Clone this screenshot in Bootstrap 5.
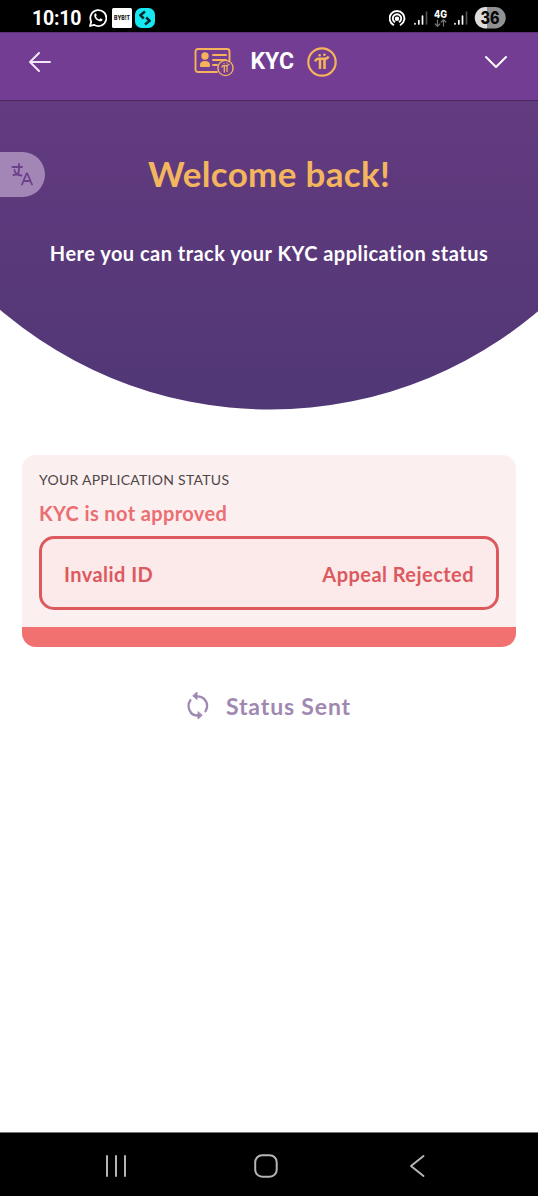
<!DOCTYPE html>
<html lang="en">
<head>
<meta charset="utf-8">
<meta name="viewport" content="width=device-width, initial-scale=1">
<title>KYC</title>
<link rel="stylesheet" href="https://cdn.jsdelivr.net/npm/bootstrap@5.3.0/dist/css/bootstrap.min.css">
<style>
body{font-family:Lato,"Open Sans",sans-serif;background:#fff}
svg{display:block;flex:none;fill:none;stroke-linecap:round;stroke-linejoin:round}
.screen{height:1200px;overflow:hidden}
.statusbar{height:32px;background:#000;color:#fff;padding:4px 29px 0 32px;font-family:Roboto,sans-serif}
.clock{font-size:19.5px;font-weight:700;line-height:29px;width:49px;white-space:nowrap;letter-spacing:-.2px}
.status-icon{margin-top:4px}
.icon-font{font-family:Inter,sans-serif;font-weight:800}
.appbar{height:69px;background:#723d92;border-top:1px solid #5d3278;border-bottom:1px solid #4b285f;padding:0 30px 10px 27px}
.app-title{font:700 23px/32px Roboto,sans-serif;color:#fff;width:44px;white-space:nowrap;margin:1px 12px 0 17px}
.hero{height:309px;background:linear-gradient(#633b80,#573879 65%,#503776);clip-path:circle(415px at 270px -106.500px);color:#fff}
.hero h1{color:#f3b65e;font-size:35px;font-weight:700;line-height:42px;padding-top:51px;margin:0;letter-spacing:.3px}
.hero p{font-size:20px;font-weight:700;line-height:28px;margin:45px 0 0;letter-spacing:.47px}
.translate-tab{top:152px;left:0;width:45px;height:45px;background:#a385b6;border-radius:0 23px 23px 0;padding:0 0 0 11px}
.status-card{margin:45px 22px 0;height:192px;border-radius:14px;background:#fbefef;border:0;overflow:hidden;padding:15px 17px 0}
.caption-line{font-size:14px;line-height:20px;color:#4e4648;letter-spacing:.27px}
.state-line{font-size:20px;font-weight:700;line-height:28px;color:#ea6e72;margin-top:9px;letter-spacing:.38px}
.result-box{height:75px;border:3px solid #dc595d;border-radius:15px;background:#fce9e9;color:#dc5960;font-size:20px;font-weight:700;padding:1px 22px 0;margin-top:9px;letter-spacing:.45px}
.card-strip{height:20px;background:#f17171;margin:17px -17px 0}
.sent{margin-top:43px;color:#9f88b2;font-size:23px;font-weight:700;line-height:32px;padding-left:186px;gap:17px;letter-spacing:.85px}
.navkeys{height:64px;background:#000;border-top:1px solid #777;margin-bottom:4px;padding:2px 113px 0 105px}
.home-key{margin-right:5px}
</style>
</head>
<body>
<main class="screen d-flex flex-column position-relative">
  <div class="statusbar d-flex align-items-start justify-content-between">
    <div class="d-flex">
      <span class="clock">10:10</span>
      <svg class="ms-2 status-icon" width="18" height="20" viewBox="0 0 18 20"><path d="M1 18l1.200-4.300A8 8 0 1 1 5 16.800z" stroke="#fff" stroke-width="1.800"/><path d="M5.500 6c1-1.400 1.600-.6 2.200 1.200L7 8.400c.8 1.600 1.800 2.400 3.200 3l1.200-1.100 2.100 1c0 2.300-2.200 2.400-4.200 1.500-2.400-1-4.900-4-3.800-6.800z" fill="#fff"/></svg>
      <svg class="status-icon" width="25" height="20" viewBox="-5 0 25 20"><rect width="20" height="20" rx="1.500" fill="#fff"/><text class="icon-font" x="2" y="12.200" font-size="5.500" textLength="16" lengthAdjust="spacingAndGlyphs" fill="#111">BYB!T</text></svg>
      <svg class="status-icon" width="23" height="20" viewBox="-3 0 23 20"><rect width="20" height="20" rx="6.500" fill="#16e8f2"/><path d="M10 3.500L5.300 7.200l3.500 3.300M11.200 9.500l3.500 3.300-4.700 3.700" stroke="#04262c" stroke-width="2.500" stroke-linecap="butt"/></svg>
    </div>
    <svg width="120" height="28" viewBox="0 0 120 28">
      <g stroke="#fff" stroke-width="1.900"><path d="M4.300 20.800a7.400 7.400 0 1 1 7.400 0M5.400 17.700a4.200 4.200 0 1 1 5.200 0"/><circle cx="8" cy="14.700" r="1.300" fill="#fff"/></g>
      <path d="M26 19.500v.5M29.800 16.500V20M33.500 12V20M66 19.500v.5M69.800 16.500V20M73.500 12V20" stroke="#fff" stroke-width="1.700"/><path d="M37.500 8V20M77.500 8V20" stroke="#555" stroke-width="1.600"/>
      <text class="icon-font" x="45" y="14" font-size="10" textLength="13" lengthAdjust="spacingAndGlyphs" fill="#fff">4G</text>
      <path d="M48.500 16v6M46.200 20l2.300 2.300 2.300-2.300M54.500 22v-6M52.200 18l2.300-2.300 2.300 2.300" stroke="#777" stroke-width="1.200"/>
      <path d="M96.500 3H98v21.500h-1.500a10.750 10.750 0 0 1 0-21.500z" fill="#ddd"/><path d="M98 3h8a10.750 10.750 0 0 1 0 21.500H98z" fill="#919191"/>
      <text class="icon-font" x="91.500" y="20" font-size="17" textLength="19" lengthAdjust="spacingAndGlyphs" fill="#080808">36</text>
    </svg>
  </div>

  <header class="appbar d-flex align-items-center justify-content-between">
    <svg width="24" height="22" viewBox="0 0 24 22" stroke="#f3e5fa" stroke-width="2"><path d="M12 2L3 11l9 9M3 11h20"/></svg>
    <div class="d-flex align-items-center" style="margin-right:5px">
      <svg width="40" height="30" viewBox="0 0 40 30" stroke="#f5b35c" stroke-width="2"><path d="M23 25H4a2.500 2.500 0 0 1-2.500-2.500v-18A2.500 2.500 0 0 1 4 2h29a2.500 2.500 0 0 1 2.500 2.500V14M19 8h13M19 13h13M19 18h4" stroke-width="1.900"/><circle cx="11" cy="9" r="2.700" fill="#f5b35c"/><path d="M7 19v-1c0-4 8-4 8 0v1z" fill="#f5b35c"/><circle cx="31.500" cy="21" r="7.600" stroke-width="1.400"/><path d="M28 20c.5-2 1.500-1.500 3-1.500s3 .5 4-1.300M30.300 19v6M33 18.500v6M30 16.300h.1M33 15.900h.1" stroke-width="1.300"/></svg>
      <span class="app-title">KYC</span>
      <svg width="30" height="30" viewBox="0 0 30 30" stroke="#f5b35c" stroke-width="2.200"><circle cx="15" cy="15" r="13.700"/><path d="M8.300 14.500c.8-3 2-2.700 4-2.700h5.200c1.700 0 3 0 4-2.300M13 12.500v9.500M17.500 12.500v9.500" stroke-linecap="butt" stroke-width="2.600"/><path d="M12.600 8.300h.1M17.400 7.800h.1" stroke-width="2.600"/></svg>
    </div>
    <svg width="24" height="16" viewBox="0 0 24 16" stroke="#fff" stroke-width="2"><path d="M2 3l10 10L22 3"/></svg>
  </header>

  <section class="hero text-center">
    <h1>Welcome back!</h1>
    <p>Here you can track your KYC application status</p>
  </section>
  <button class="translate-tab position-absolute border-0" type="button" aria-label="Translate">
    <svg width="24" height="24" viewBox="0 0 24 24" stroke="#6b418b" stroke-width="1.800"><path d="M1.500 4h9.500M8 1v6c0 3-2 5-5.500 5M3.500 7c0 3 3 5 7 5.500M11 21.500l4.500-11h.8l4.700 11M12.500 18h7"/></svg>
  </button>

  <section class="status-card card">
    <div class="caption-line">YOUR APPLICATION STATUS</div>
    <div class="state-line">KYC is not approved</div>
    <div class="result-box d-flex align-items-center justify-content-between"><span>Invalid ID</span><span>Appeal Rejected</span></div>
    <div class="card-strip"></div>
  </section>

  <div class="sent d-flex align-items-center">
    <svg width="23" height="30" viewBox="0 0 23 30" stroke="#9f88b2" stroke-width="2.300" stroke-linecap="butt"><path d="M5 21.500A9.800 9.800 0 0 1 4.400 9.200M10 5.300h1.500a9.600 9.600 0 0 1 9.600 9.600 9.600 9.600 0 0 1-1.600 5.300M13 24.500h-1.500a9.600 9.600 0 0 1-6.800-2.900"/><path d="M11 1.500v7L7 5zM12 21v7l4-3.500z" fill="#9f88b2" stroke-width="1"/></svg>
    <span>Status Sent</span>
  </div>

  <nav class="navkeys d-flex align-items-center justify-content-between mt-auto">
    <svg width="22" height="24" viewBox="0 0 22 24" stroke="#b5b5b5" stroke-width="2"><path d="M2 2v20M11 2v20M20 2v20"/></svg>
    <svg class="home-key" width="24" height="24" viewBox="0 0 24 24" stroke="#b5b5b5" stroke-width="2"><rect x="1.200" y="1.200" width="21.500" height="21.500" rx="7"/></svg>
    <svg width="16" height="24" viewBox="0 0 16 24" stroke="#b5b5b5" stroke-width="2"><path d="M14.500 2L2 12l12.500 10"/></svg>
  </nav>
</main>
<script src="https://cdn.jsdelivr.net/npm/bootstrap@5.3.0/dist/js/bootstrap.bundle.min.js"></script>
</body>
</html>
